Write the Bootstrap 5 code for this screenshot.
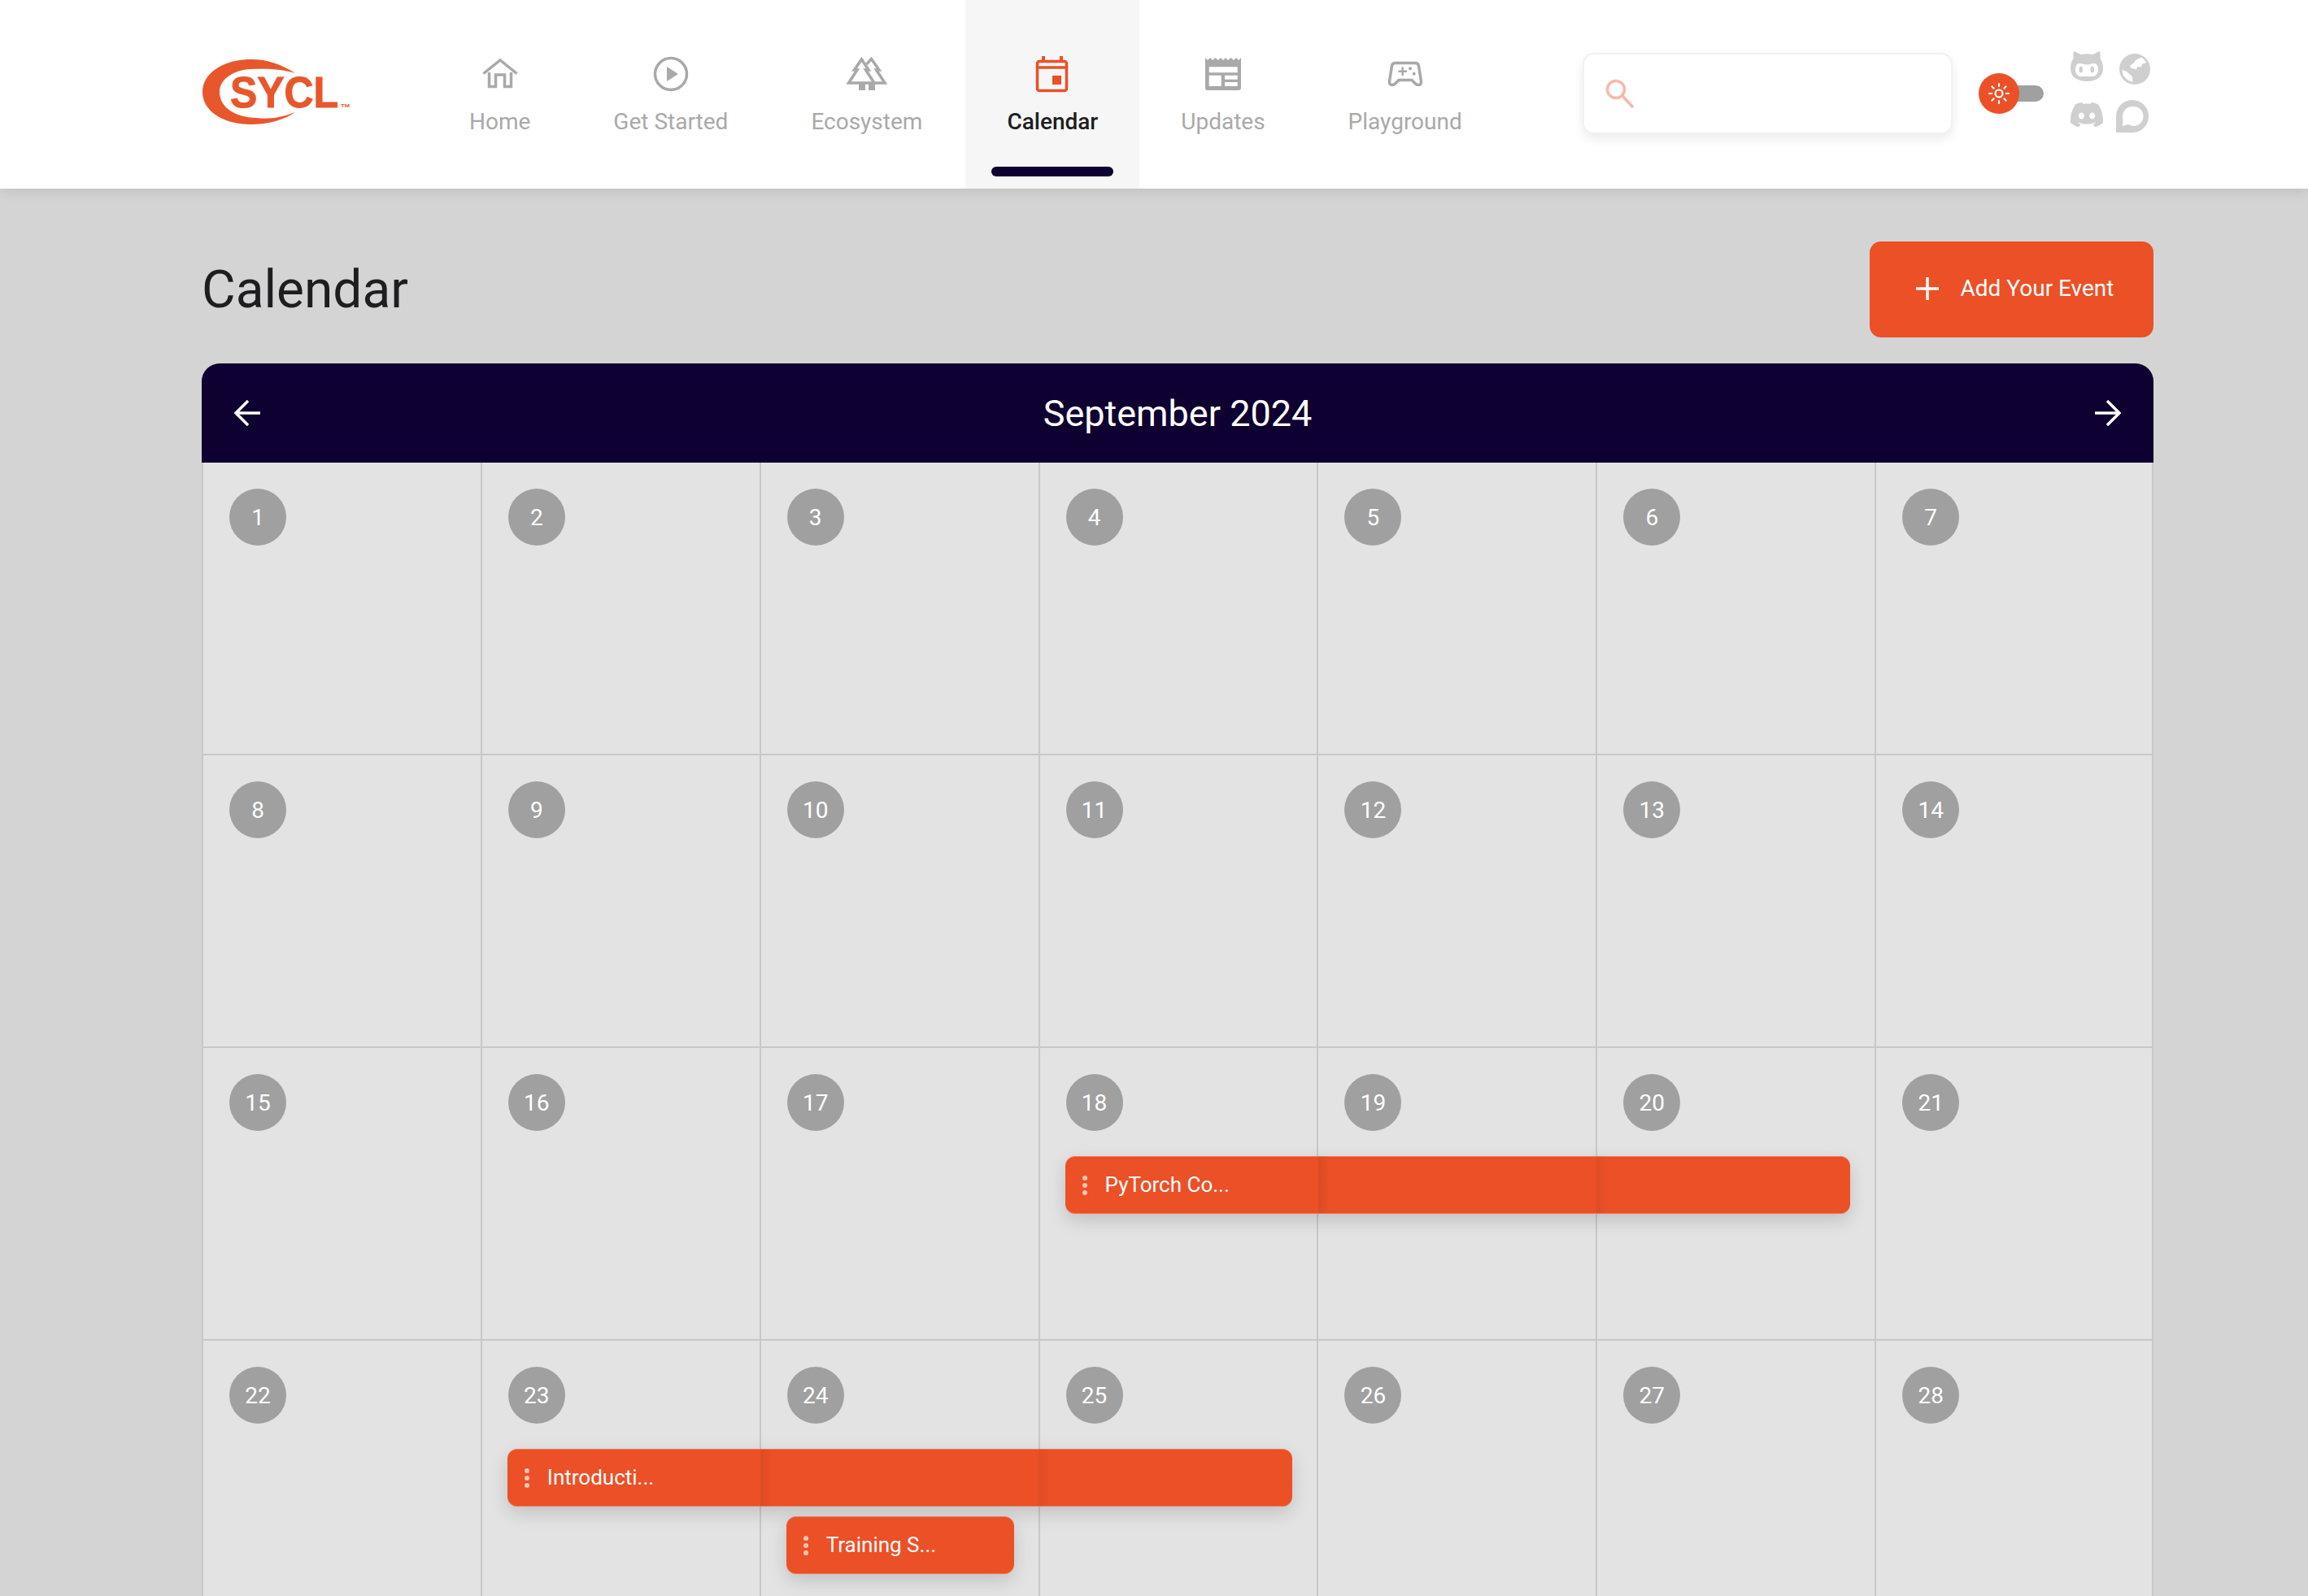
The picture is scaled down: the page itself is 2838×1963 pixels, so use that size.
<!DOCTYPE html>
<html lang="en">
<head>
    <meta charset="UTF-8">
    <meta name="viewport" content="width=device-width, initial-scale=1.0">
    <title>Calendar</title>
    <link href="https://cdn.jsdelivr.net/npm/bootstrap@5.3.0/dist/css/bootstrap.min.css" rel="stylesheet">
    <style>
        html, body { height: 100%; overflow: hidden; }
        body { background: #d4d4d4; font-family: Roboto, "Liberation Sans", sans-serif; color: #1e1e20; }

        .site-head { height: 232px; background: #fff; padding-left: 248px; box-shadow: 0 3px 14px rgba(0,0,0,.1); position: relative; z-index: 5; }
        .logo-svg { width: 190px; height: 100px; flex: none; }
        .main-nav { margin-left: 88px; }
        .nav-tab { height: 232px; padding: 67px 51px 0; color: #a9a9a9; font-size: 28px; line-height: 34px; text-decoration: none; position: relative; }
        .nav-tab svg { display: block; height: 48px; margin-bottom: 18px; }
        .nav-tab.is-active { margin-left: 2px; background: #f6f6f7; color: #1e1e20; font-weight: 500; }
        .nav-tab.is-active::after { content: ""; position: absolute; left: 32px; right: 32px; top: 205px; height: 12px; border-radius: 6px; background: #0e0030; }

        .search-box { width: 455px; height: 100px; margin: 0 0 3px 97px; padding-left: 26px; background: #fff; border: 2px solid #f1f1f1; border-radius: 14px; box-shadow: 0 6px 14px rgba(0,0,0,.08); }
        .search-box input { border: 0; box-shadow: none; font-size: 28px; background: transparent; }
        .theme-toggle { margin: 0 0 2px 32px; }
        .toggle-knob { width: 50px; height: 50px; border-radius: 50%; background: #eb5027; position: relative; z-index: 1; }
        .toggle-track { width: 60px; height: 20px; margin-left: -30px; background: #a0a0a0; border-radius: 0 10px 10px 0; }
        .social-grid { display: grid; grid-template-columns: 40px 40px; grid-template-rows: 40px 40px; gap: 20px; margin: 62px 0 0 33px; align-self: flex-start; }
        .social-grid svg { display: block; fill: #cfcfcf; }
        .ico-chat { margin: 1px 0 0 -4px; }

        .page-body { padding: 65px 190px 0 248px; }
        .page-title { font-size: 64px; font-weight: 400; line-height: 1; margin: 2px 0 0; }
        .btn-add { width: 349px; height: 118px; padding: 0 0 2px 8px; background: #eb5027; color: #fff; border: 0; border-radius: 14px; font-size: 28px; gap: 27px; }
        .btn-add:hover { background: #eb5027; color: #fff; }

        .cal-wrap { margin-top: 32px; }
        .cal-head { height: 122px; padding: 0 40px; background: #0e0030; color: #fff; border-radius: 22px 22px 0 0; }
        .cal-head h2 { font-size: 45px; font-weight: 400; margin: 0; padding-top: 1px; }
        .cal-head svg { display: block; }
        .week-row { display: grid; grid-template-columns: repeat(7, 1fr); height: 360px; }
        .day-cell { background: #e3e3e3; border-left: 2px solid #c8c8c8; border-bottom: 2px solid #c8c8c8; padding: 32px 0 0 32px; min-width: 0; }
        .day-cell:last-child { border-right: 2px solid #c8c8c8; }
        .day-num { width: 70px; height: 70px; padding-top: 1px; border-radius: 50%; background: #a0a0a0; color: #fff; font-size: 28px; }

        .cal-event { height: 71px; margin: 31px 0 0 -1px; padding-left: 21px; gap: 22px; position: relative; z-index: 2; background-color: #eb5027; color: #fff; font-size: 26px; border-radius: 12px; white-space: nowrap; box-shadow: inset 0 1px 0 rgba(255,255,255,.22), inset 0 -1px 0 rgba(255,255,255,.22), 0 8px 22px rgba(0,0,0,.15); background-repeat: no-repeat; background-size: 14px 100%; }
        .cal-event svg { flex: none; }
        .span-three { width: 965px; background-image: linear-gradient(to right, rgba(0,0,0,.07), transparent), linear-gradient(to right, rgba(0,0,0,.05), transparent); background-position: 311px 0, 653px 0; }
        .span-one { width: 280px; margin-top: 12px; }
        .event-slot { height: 71px; margin-top: 31px; }
    </style>
</head>
<body>
    <header class="site-head d-flex align-items-center">
        <svg class="logo-svg" viewBox="8 1 190 100" aria-label="SYCL">
            <path fill="#e8572c" d="M123 25C105 14 90 8 68 8C35 8 9 25 9 48C9 72 35 88 68 88C90 88 110 82 123 73C105 80 90 82 75 80C50 79 30 68 30 48C30 32 48 21 68 20C90 19 108 20 123 25Z"/>
            <text x="43" y="67" font-family="Liberation Sans" font-weight="700" font-size="53" fill="#e8572c" stroke="#e8572c" stroke-width="1" textLength="133" lengthAdjust="spacingAndGlyphs">SYCL</text>
            <text x="179" y="67" font-family="Liberation Sans" font-weight="700" font-size="6" fill="#e8572c" textLength="11" lengthAdjust="spacingAndGlyphs">TM</text>
        </svg>

        <nav class="main-nav d-flex">
            <a class="nav-tab d-flex flex-column align-items-center" href="#">
                <svg width="48" viewBox="0 0 48 48" fill="none" stroke="#a9a9a9" stroke-width="3.500"><path d="M3.500 23.500L24 7L44.500 23.500"/><path d="M10.500 22V39.500H18.500V25H29.500V39.500H37.500V22"/></svg>
                Home
            </a>
            <a class="nav-tab d-flex flex-column align-items-center" href="#">
                <svg width="48" viewBox="0 0 48 48" fill="none" stroke="#a9a9a9" stroke-width="3.500"><circle cx="24" cy="24" r="19.500"/><path d="M19 15L33 24L19 33Z" fill="#a9a9a9" stroke="none"/></svg>
                Get Started
            </a>
            <a class="nav-tab d-flex flex-column align-items-center" href="#">
                <svg width="52" viewBox="0 0 52 48" fill="none" stroke="#a9a9a9" stroke-width="3.500"><path d="M19.500 6L28 19H24.500L35 35H3.500L14 19H10.500Z"/><path d="M25.500 12L31.500 5.500L41 19H37.500L48 35H35"/><path d="M16 36H24V44H16ZM28 36H36V44H28Z" fill="#a9a9a9" stroke="none"/></svg>
                Ecosystem
            </a>
            <a class="nav-tab is-active d-flex flex-column align-items-center" href="#">
                <svg width="48" viewBox="0 0 48 48" fill="none" stroke="#eb5027" stroke-width="3.500"><rect x="5.500" y="8.500" width="36" height="36" rx="2.500"/><path d="M5 16H42"/><path d="M13 2V8M35 2V8" stroke-width="4"/><rect x="24" y="26" width="11" height="11" fill="#eb5027" stroke="none"/></svg>
                Calendar
            </a>
            <a class="nav-tab d-flex flex-column align-items-center" href="#">
                <svg width="48" viewBox="0 0 48 48"><path fill="#a9a9a9" fill-rule="evenodd" d="M2 4L5 7L8 4L11 7L14.500 4L18 7L21 4L24 7L27 4L30 7L33.500 4L37 7L40 4L43 7L46 4V41Q46 44 43 44H5Q2 44 2 41ZM6.700 15.300V22.300H41.700V15.300ZM6.700 25.700V39H21.700V25.700ZM26 25.700V30.700H41.700V25.700ZM26 34V39H41.700V34Z"/></svg>
                Updates
            </a>
            <a class="nav-tab d-flex flex-column align-items-center" href="#">
                <svg width="48" viewBox="0 0 48 48" fill="none" stroke="#a9a9a9" stroke-width="3.500"><path d="M12 10.500H36Q40 10.500 40.500 14L43.500 33Q44 37.500 40 37.500Q38 37.500 36 35.500L32 31.500H16L12 35.500Q10 37.500 8 37.500Q4 37.500 4.500 33L7.500 14Q8 10.500 12 10.500Z"/><path d="M15.500 20.700H26M20.700 15.500V26" stroke-width="2.500"/><circle cx="30" cy="17.300" r="2" fill="#a9a9a9" stroke="none"/><circle cx="34.700" cy="23.700" r="2" fill="#a9a9a9" stroke="none"/></svg>
                Playground
            </a>
        </nav>

        <div class="search-box d-flex align-items-center">
            <svg width="36" height="36" viewBox="0 0 36 36" fill="none" stroke="#f6b9a8" stroke-width="3.500" class="flex-shrink-0"><circle cx="13" cy="13" r="10.500"/><path d="M21 21L34 35"/></svg>
            <input type="text" class="form-control" aria-label="Search">
        </div>

        <div class="theme-toggle d-flex align-items-center">
            <div class="toggle-knob d-flex align-items-center justify-content-center">
                <svg width="30" height="30" viewBox="0 0 30 30" fill="none" stroke="#fff" stroke-width="2.200" stroke-linecap="round"><circle cx="15" cy="15" r="4.500"/><path d="M15 3V6M15 24V27M3 15H6M24 15H27M6.500 6.500L8.600 8.600M21.400 21.400L23.500 23.500M6.500 23.500L8.600 21.400M21.400 8.600L23.500 6.500"/></svg>
            </div>
            <div class="toggle-track"></div>
        </div>

        <div class="social-grid">
            <svg width="40" height="38" viewBox="0 0 40 38"><path fill-rule="evenodd" d="M4 1L13 5Q20 3.500 27 5L36 1Q37 6 36.500 10Q40 15 40 22C40 33 31 38 20 38C9 38 0 33 0 22Q0 15 3.500 10Q3 6 4 1ZM11 16C7 16 6 20 6 24C6 29 9 32 13 32H27C31 32 34 29 34 24C34 20 33 16 29 16C25 16 23 17.500 20 17.500C17 17.500 15 16 11 16ZM12.700 19.500C11.300 19.500 10.500 21 10.500 23.500C10.500 26 11.300 27.500 12.700 27.500C14.100 27.500 15 26 15 23.500C15 21 14.100 19.500 12.700 19.500ZM26.700 19.500C25.300 19.500 24.500 21 24.500 23.500C24.500 26 25.300 27.500 26.700 27.500C28.100 27.500 29 26 29 23.500C29 21 28.100 19.500 26.700 19.500Z"/></svg>
            <svg width="38" height="38" viewBox="0 0 38 38" class="mt-1"><circle cx="19" cy="19" r="19"/><path fill="#fff" d="M27 4.500Q31 7 33.500 11L28 12.500L27 16.500L22 16L21 19.500L14 17.500L13.500 14.500L18 11.500L20 8ZM3.500 20L9 22L16 28L16.500 34.500Q8 33 4.500 26Z"/></svg>
            <svg width="40" height="30" viewBox="0 3 24 18" class="mt-1"><path d="M20.317 4.3698a19.7913 19.7913 0 00-4.8851-1.5152.0741.0741 0 00-.0785.0371c-.211.3753-.4447.8648-.6083 1.2495-1.8447-.2762-3.68-.2762-5.4868 0-.1636-.3933-.4058-.8742-.6177-1.2495a.077.077 0 00-.0785-.037 19.7363 19.7363 0 00-4.8852 1.515.0699.0699 0 00-.0321.0277C.5334 9.0458-.319 13.5799.0992 18.0578a.0824.0824 0 00.0312.0561c2.0528 1.5076 4.0413 2.4228 5.9929 3.0294a.0777.0777 0 00.0842-.0276c.4616-.6304.8731-1.2952 1.226-1.9942a.076.076 0 00-.0416-.1057c-.6528-.2476-1.2743-.5495-1.8722-.8923a.077.077 0 01-.0076-.1277c.1258-.0943.2517-.1923.3718-.2914a.0743.0743 0 01.0776-.0105c3.9278 1.7933 8.18 1.7933 12.0614 0a.0739.0739 0 01.0785.0095c.1202.099.246.1981.3728.2924a.077.077 0 01-.0066.1276 12.2986 12.2986 0 01-1.8732.8914.0766.0766 0 00-.0407.1067c.3604.698.7719 1.3628 1.225 1.9932a.076.076 0 00.0842.0286c1.961-.6067 3.9495-1.5219 6.0023-3.0294a.077.077 0 00.0313-.0552c.5004-5.177-.8382-9.6739-3.5485-13.6604a.061.061 0 00-.0312-.0286zM8.02 15.3312c-1.1825 0-2.1569-1.0857-2.1569-2.419 0-1.3332.9555-2.4189 2.157-2.4189 1.2108 0 2.1757 1.0952 2.1568 2.419 0 1.3332-.9555 2.4189-2.1569 2.4189zm7.9748 0c-1.1825 0-2.1569-1.0857-2.1569-2.419 0-1.3332.9554-2.4189 2.1569-2.4189 1.2108 0 2.1757 1.0952 2.1568 2.419 0 1.3332-.946 2.4189-2.1568 2.4189z"/></svg>
            <svg width="40" height="40" viewBox="0 0 40 40" class="ico-chat"><path fill-rule="evenodd" d="M20 0A20 20 0 0 1 20 40H0V20A20 20 0 0 1 20 0ZM20 8A12 12 0 0 0 8.500 23.500L8 32L15 30A12 12 0 1 0 20 8Z"/></svg>
        </div>
    </header>

    <main class="page-body">
        <div class="d-flex justify-content-between align-items-center">
            <h1 class="page-title">Calendar</h1>
            <button class="btn btn-add d-flex align-items-center justify-content-center" type="button">
                <svg width="28" height="28" viewBox="0 0 28 28" stroke="#fff" stroke-width="3.500"><path d="M14 0V28M0 14H28"/></svg>
                Add Your Event
            </button>
        </div>

        <section class="cal-wrap">
            <div class="cal-head d-flex justify-content-between align-items-center">
                <svg width="32" height="32" viewBox="0 0 32 32" fill="none" stroke="#fff" stroke-width="3.500"><path d="M32 16H2M17 1L2 16L17 31"/></svg>
                <h2>September 2024</h2>
                <svg width="32" height="32" viewBox="0 0 32 32" fill="none" stroke="#fff" stroke-width="3.500"><path d="M0 16H30M15 1L30 16L15 31"/></svg>
            </div>

            <div class="week-row">
                <div class="day-cell"><div class="day-num d-flex align-items-center justify-content-center">1</div></div>
                <div class="day-cell"><div class="day-num d-flex align-items-center justify-content-center">2</div></div>
                <div class="day-cell"><div class="day-num d-flex align-items-center justify-content-center">3</div></div>
                <div class="day-cell"><div class="day-num d-flex align-items-center justify-content-center">4</div></div>
                <div class="day-cell"><div class="day-num d-flex align-items-center justify-content-center">5</div></div>
                <div class="day-cell"><div class="day-num d-flex align-items-center justify-content-center">6</div></div>
                <div class="day-cell"><div class="day-num d-flex align-items-center justify-content-center">7</div></div>
            </div>
            <div class="week-row">
                <div class="day-cell"><div class="day-num d-flex align-items-center justify-content-center">8</div></div>
                <div class="day-cell"><div class="day-num d-flex align-items-center justify-content-center">9</div></div>
                <div class="day-cell"><div class="day-num d-flex align-items-center justify-content-center">10</div></div>
                <div class="day-cell"><div class="day-num d-flex align-items-center justify-content-center">11</div></div>
                <div class="day-cell"><div class="day-num d-flex align-items-center justify-content-center">12</div></div>
                <div class="day-cell"><div class="day-num d-flex align-items-center justify-content-center">13</div></div>
                <div class="day-cell"><div class="day-num d-flex align-items-center justify-content-center">14</div></div>
            </div>
            <div class="week-row">
                <div class="day-cell"><div class="day-num d-flex align-items-center justify-content-center">15</div></div>
                <div class="day-cell"><div class="day-num d-flex align-items-center justify-content-center">16</div></div>
                <div class="day-cell"><div class="day-num d-flex align-items-center justify-content-center">17</div></div>
                <div class="day-cell">
                    <div class="day-num d-flex align-items-center justify-content-center">18</div>
                    <div class="cal-event span-three d-flex align-items-center">
                        <svg width="6" height="24" viewBox="0 0 6 24" fill="#ffc4b3"><circle cx="3" cy="3" r="3"/><circle cx="3" cy="12" r="3"/><circle cx="3" cy="21" r="3"/></svg>
                        PyTorch Co...
                    </div>
                </div>
                <div class="day-cell"><div class="day-num d-flex align-items-center justify-content-center">19</div></div>
                <div class="day-cell"><div class="day-num d-flex align-items-center justify-content-center">20</div></div>
                <div class="day-cell"><div class="day-num d-flex align-items-center justify-content-center">21</div></div>
            </div>
            <div class="week-row">
                <div class="day-cell"><div class="day-num d-flex align-items-center justify-content-center">22</div></div>
                <div class="day-cell">
                    <div class="day-num d-flex align-items-center justify-content-center">23</div>
                    <div class="cal-event span-three d-flex align-items-center">
                        <svg width="6" height="24" viewBox="0 0 6 24" fill="#ffc4b3"><circle cx="3" cy="3" r="3"/><circle cx="3" cy="12" r="3"/><circle cx="3" cy="21" r="3"/></svg>
                        Introducti...
                    </div>
                </div>
                <div class="day-cell">
                    <div class="day-num d-flex align-items-center justify-content-center">24</div>
                    <div class="event-slot"></div>
                    <div class="cal-event span-one d-flex align-items-center">
                        <svg width="6" height="24" viewBox="0 0 6 24" fill="#ffc4b3"><circle cx="3" cy="3" r="3"/><circle cx="3" cy="12" r="3"/><circle cx="3" cy="21" r="3"/></svg>
                        Training S...
                    </div>
                </div>
                <div class="day-cell"><div class="day-num d-flex align-items-center justify-content-center">25</div></div>
                <div class="day-cell"><div class="day-num d-flex align-items-center justify-content-center">26</div></div>
                <div class="day-cell"><div class="day-num d-flex align-items-center justify-content-center">27</div></div>
                <div class="day-cell"><div class="day-num d-flex align-items-center justify-content-center">28</div></div>
            </div>
        </section>
    </main>

    <script src="https://cdn.jsdelivr.net/npm/bootstrap@5.3.0/dist/js/bootstrap.bundle.min.js"></script>
</body>
</html>
